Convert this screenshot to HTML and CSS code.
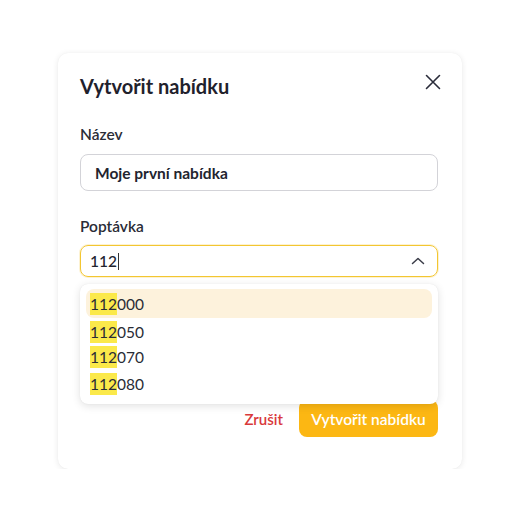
FILE: index.html
```html
<!DOCTYPE html>
<html lang="cs">
<head>
<meta charset="utf-8">
<link rel="stylesheet" href="styles.css">
</head>
<body>
<div class="card">
  <div class="head">
    <h1 class="title">Vytvořit nabídku</h1>
    <svg class="close" width="16" height="16" viewBox="0 0 16 16"><path d="M1.5 1.5 L14.5 14.5 M14.5 1.5 L1.5 14.5" stroke="#2a2c3a" stroke-width="1.6" stroke-linecap="round" fill="none"/></svg>
  </div>
  <div class="field">
    <div class="label">Název</div>
    <div class="input">Moje první nabídka</div>
  </div>
  <div class="field field2">
    <div class="label">Poptávka</div>
    <div class="input select"><span class="typed">112<span class="caret"></span></span>
      <svg class="chev" width="14" height="8" viewBox="0 0 14 8"><path d="M1.5 6.5 L7 1.5 L12.5 6.5" stroke="#3a3c48" stroke-width="1.5" stroke-linecap="round" stroke-linejoin="round" fill="none"/></svg>
    </div>
    <div class="menu">
      <div class="opt active"><mark>112</mark>000</div>
      <div class="opt"><mark>112</mark>050</div>
      <div class="opt o3"><mark>112</mark>070</div>
      <div class="opt o4"><mark>112</mark>080</div>
    </div>
  </div>
  <div class="actions">
    <span class="cancel">Zrušit</span>
    <span class="primary">Vytvořit nabídku</span>
  </div>
</div>
</body>
</html>
```
FILE: styles.css
```css
html, body { margin: 0; padding: 0; background: #fff; }
body {
  font-family: "Lato", "Open Sans", sans-serif;
  color: #23252f;
  padding: 53px 58px 0 58px;
}
.card {
  width: 404px;
  box-sizing: border-box;
  background: #fff;
  border-radius: 10px;
  box-shadow: 0 1px 6px rgba(0,0,0,0.09), 0 0 1px rgba(0,0,0,0.06);
  padding: 20px 24px 32px 22px;
}
.head {
  display: flex;
  justify-content: space-between;
  align-items: flex-start;
  height: 51px;
}
.title {
  margin: 0;
  font-size: 20px;
  font-weight: 700;
  line-height: 26px;
  color: #1f212c;
}
.close { margin-top: 1px; margin-right: -3px; }
.field { position: relative; }
.label {
  font-size: 15.5px;
  font-weight: 600;
  line-height: 20px;
  color: #2a2c36;
  margin-bottom: 10px;
}
.input {
  height: 37px;
  box-sizing: border-box;
  border: 1px solid #d3d3d8;
  border-radius: 8px;
  padding: 0 14px;
  display: flex;
  align-items: center;
  font-size: 15.5px;
  font-weight: 700;
  color: #22242e;
}
.field2 { margin-top: 25px; }
.field2 .label { margin-bottom: 9px; }
.select {
  height: 32px;
  border: 1.5px solid #f3c631;
  box-shadow: 0 0 0 1px rgba(246, 205, 70, 0.25);
  padding: 0 12px 0 9px;
  justify-content: space-between;
  font-weight: 500;
}
.typed { display: flex; align-items: center; }
.caret { display: inline-block; width: 1px; height: 17px; background: #333; margin-left: 1px; }
.chev { margin-top: -1px; }
.menu {
  position: absolute;
  left: 0; right: 0;
  top: 68px;
  height: 120px;
  box-sizing: border-box;
  background: #fff;
  border-radius: 8px;
  box-shadow: 0 2px 8px rgba(0,0,0,0.12), 0 0 1px rgba(0,0,0,0.1);
  padding: 5px 6px;
  z-index: 2;
}
.opt {
  height: 28px;
  display: flex;
  align-items: center;
  padding-left: 4px;
  font-size: 15.5px;
  color: #2a2c36;
  border-radius: 8px;
}
.opt.active { background: #fdf2dc; height: 29px; }
.o3 { height: 22px; }
.o4 { height: 32px; }
mark { background: #fbe94a; color: inherit; padding: 2px 0; }
.actions {
  display: flex;
  justify-content: flex-end;
  align-items: center;
  gap: 16px;
  margin-top: 123px;
}
.cancel { color: #d9393b; font-weight: 600; font-size: 15px; }
.primary {
  background: #fcb713;
  color: #fff;
  font-weight: 600;
  font-size: 15.5px;
  height: 37px;
  width: 139px;
  border-radius: 8px;
  display: flex;
  align-items: center;
  justify-content: center;
}
```
